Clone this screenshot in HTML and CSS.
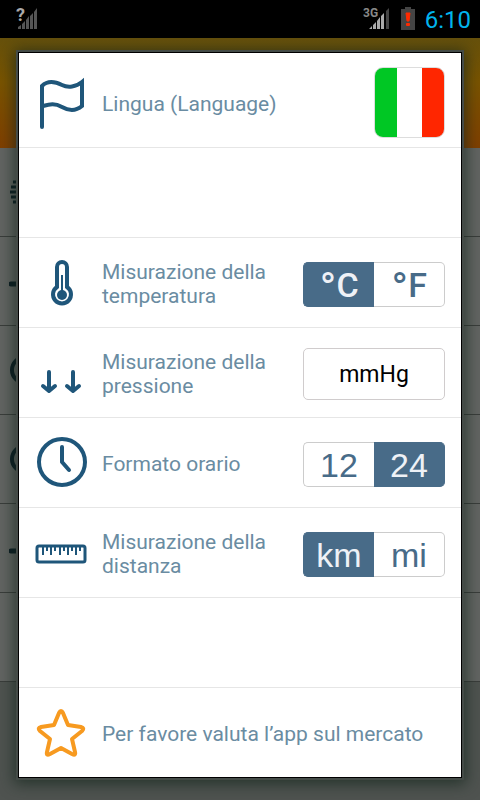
FILE: index.html
```html
<!DOCTYPE html>
<html lang="it">
<head>
    <meta charset="UTF-8">
    <meta name="viewport" content="width=device-width, initial-scale=1.0">
    <title>Impostazioni</title>
    <link rel="stylesheet" href="styles.css">
</head>
<body>

<header class="status-bar">
    <svg class="signal" width="22" height="24" viewBox="0 0 22 24">
        <path d="M1 22V20L4 18V22ZM5 22V17L8 14V22ZM9 22V13L12 9V22ZM13 22V9L16 6V22ZM17 22V5L20 1V22Z" fill="#555"/>
        <text x="-1" y="14" class="signal-unknown">?</text>
    </svg>
    <div class="status-right">
        <svg width="28" height="24" viewBox="0 0 28 24">
            <path d="M6 22L9 19V22ZM10 22V18L13 15V22ZM14 22V14L17 10V22ZM18 22V9L21 6V22Z" fill="#aaa"/>
            <path d="M23 22V4L26 1V22Z" fill="#444"/>
            <text x="0" y="10" class="signal-type">3G</text>
        </svg>
        <svg width="16" height="24" viewBox="0 0 16 24">
            <path d="M1 2H5V0H11V2H15V23H1Z" fill="#444"/>
            <path d="M6 6H10L9 14H7Z" fill="#ff2a00" stroke="#ff2a00"/>
            <rect x="6" y="16" width="4" height="3" rx="1" fill="#ff2a00"/>
        </svg>
        <time>6:10</time>
    </div>
</header>

<main class="screen">
    <!-- dimmed list under the dialog -->
    <div class="backdrop" aria-hidden="true">
        <div class="backdrop-header"></div>
        <div class="backdrop-row">
            <svg width="24" height="30" viewBox="0 0 24 30"><path d="M4 5H24M2 10H24M1 15H24M2 20H24M4 25H24" stroke="#0b1c22" stroke-width="3"/></svg>
        </div>
        <div class="backdrop-row">
            <svg width="24" height="30" viewBox="0 0 24 30"><path d="M2 18H24" stroke="#0b1c22" stroke-width="5" stroke-linecap="round"/></svg>
        </div>
        <div class="backdrop-row">
            <svg width="24" height="30" viewBox="0 0 24 30"><circle cx="16" cy="15" r="13" fill="none" stroke="#0b1c22" stroke-width="4"/></svg>
        </div>
        <div class="backdrop-row">
            <svg width="24" height="30" viewBox="0 0 24 30"><circle cx="16" cy="15" r="13" fill="none" stroke="#0b1c22" stroke-width="4"/></svg>
        </div>
        <div class="backdrop-row">
            <svg width="24" height="30" viewBox="0 0 24 30"><path d="M2 18H24" stroke="#0b1c22" stroke-width="5" stroke-linecap="round"/></svg>
        </div>
        <div class="backdrop-row"></div>
    </div>

    <form class="dialog">
        <div class="row row-language">
            <svg class="icon" width="52" height="52" viewBox="0 0 52 52" fill="none" stroke="#1f567a" stroke-width="4" stroke-linecap="round">
                <path d="M7 50V9C13 3 21 5 27 8S41 10 47 5V29C41 34 34 34 27 30S15 27 8 29"/>
            </svg>
            <span class="label" id="language">Lingua (Language)</span>
            <button type="button" class="flag" aria-labelledby="language"></button>
        </div>

        <div class="row"></div>

        <div class="row">
            <svg class="icon" width="52" height="52" viewBox="0 0 52 52" stroke="#1f567a">
                <path d="M22 30V10A5 5 0 0 1 32 10V30A9 9 0 1 1 22 30Z" fill="none" stroke-width="4"/>
                <circle cx="27" cy="38" r="5" fill="#1f567a" stroke="none"/>
                <path d="M27 18V35" stroke-width="2"/>
            </svg>
            <span class="label">Misurazione della temperatura</span>
            <div class="toggle units" role="radiogroup">
                <label><input type="radio" name="temp" checked><span><b>°</b>C</span></label>
                <label><input type="radio" name="temp"><span><b>°</b>F</span></label>
            </div>
        </div>

        <div class="row">
            <svg class="icon" width="52" height="52" viewBox="0 0 52 52" fill="none" stroke="#1f567a" stroke-width="4" stroke-linecap="round" stroke-linejoin="round">
                <path d="M14 25V44M8 39L14 44L20 39M38 25V44M32 39L38 44L44 39"/>
            </svg>
            <label class="label" for="pressure">Misurazione della pressione</label>
            <select id="pressure">
                <option>mmHg</option>
            </select>
        </div>

        <div class="row">
            <svg class="icon" width="52" height="52" viewBox="0 0 52 52" fill="none" stroke="#1f567a" stroke-width="4" stroke-linecap="round" stroke-linejoin="round">
                <circle cx="27" cy="25" r="23"/>
                <path d="M27 10V25L34 33"/>
            </svg>
            <span class="label">Formato orario</span>
            <div class="toggle" role="radiogroup">
                <label><input type="radio" name="time"><span>12</span></label>
                <label><input type="radio" name="time" checked><span>24</span></label>
            </div>
        </div>

        <div class="row">
            <svg class="icon" width="52" height="52" viewBox="0 0 52 52" fill="none" stroke="#1f567a">
                <rect x="2" y="19" width="48" height="16" rx="2" stroke-width="3"/>
                <path d="M8 19V28M12 19V24M16 19V28M20 19V24M25 19V28M29 19V24M33 19V28M37 19V24M41 19V28M45 19V24" stroke-width="2"/>
            </svg>
            <span class="label">Misurazione della distanza</span>
            <div class="toggle" role="radiogroup">
                <label><input type="radio" name="distance" checked><span>km</span></label>
                <label><input type="radio" name="distance"><span>mi</span></label>
            </div>
        </div>

        <div class="row"></div>

        <a href="#" class="row">
            <svg class="icon" width="52" height="52" viewBox="0 0 52 52" fill="none" stroke="#f79a20" stroke-width="4" stroke-linejoin="round">
                <path d="M24 6Q26 2 28 6L33 18L46 20Q50 21 47 24L37 32L40 45Q41 49 37 47L26 41L15 47Q11 49 12 45L15 32L5 24Q2 21 6 20L19 18Z"/>
            </svg>
            <span class="label">Per favore valuta l’app sul mercato</span>
        </a>
    </form>
</main>

</body>
</html>
```
FILE: styles.css
```css
* {
    box-sizing: border-box;
    margin: 0;
    padding: 0;
}

body {
    font-family: Roboto, "Noto Sans", sans-serif;
    background-color: #4f5350;
    min-height: 100vh;
    display: flex;
    flex-direction: column;
}

.status-bar {
    height: 38px;
    padding: 0 9px 0 17px;
    background-color: #000;
    display: flex;
    justify-content: space-between;
    align-items: center;
}

.signal {
    overflow: visible;
}

.signal-unknown {
    font-size: 18px;
    font-weight: bold;
    fill: #aaa;
}

.signal-type {
    font-size: 12px;
    font-weight: bold;
    fill: #888;
}

.status-right {
    display: flex;
    align-items: center;
    gap: 9px;
}

.status-right time {
    padding-top: 2px;
    font-size: 24px;
    line-height: 36px;
    color: #00b4ec;
}

.screen {
    position: relative;
    flex: 1;
    padding: 14px 18px 22px;
}

.backdrop {
    position: absolute;
    inset: 0;
    overflow: hidden;
}

.backdrop-header {
    height: 110px;
    background: linear-gradient(#66510c, #7a5400 40%, #803f00);
}

.backdrop-row {
    height: 89px;
    padding-left: 9px;
    background-color: #626462;
    border-bottom: 1px solid #3a3d3b;
    display: flex;
    align-items: center;
}

.dialog {
    position: relative;
    background-color: #fff;
    border: 1px solid #000;
    box-shadow: 0 0 0 2px #444b47, 0 2px 14px 4px rgba(20, 38, 28, 0.7);
}

.row {
    height: 90px;
    padding: 0 16px;
    border-bottom: 1px solid #e6e6e6;
    display: flex;
    align-items: center;
    text-decoration: none;
}

.row:last-child {
    height: 89px;
    border-bottom: none;
}

.row-language {
    height: 95px;
    padding-top: 5px;
}

.icon {
    flex: none;
    margin-right: 15px;
}

.label {
    flex: 1;
    padding-top: 3px;
    font-size: 21px;
    line-height: 24px;
    color: #6a8ca2;
}

.flag {
    width: 71px;
    height: 71px;
    border: 1px solid #ddd;
    border-radius: 9px;
    background: linear-gradient(90deg, #00c724 32%, #fff 32%, #fff 68%, #ff2600 68%) border-box;
}

.toggle {
    width: 142px;
    height: 45px;
    margin-top: 3px;
    display: flex;
}

.toggle label {
    flex: 1;
    cursor: pointer;
}

.toggle input {
    position: absolute;
    opacity: 0;
}

.toggle span {
    display: block;
    height: 100%;
    border: 1px solid #ccc;
    font-family: "Liberation Sans", Arial, sans-serif;
    font-size: 34px;
    line-height: 44px;
    text-align: center;
    color: #486b88;
}

.toggle label:first-child span {
    border-right: none;
    border-radius: 5px 0 0 5px;
}

.toggle label:last-child span {
    border-left: none;
    border-radius: 0 5px 5px 0;
}

.toggle input:checked + span {
    background-color: #486b88;
    border-color: #486b88;
    color: #eef1f6;
}

.toggle.units span {
    font-family: Roboto, sans-serif;
    font-weight: 500;
}

.units b {
    font-family: "DejaVu Sans", sans-serif;
}

select {
    width: 142px;
    height: 52px;
    margin-top: 2px;
    padding-top: 1px;
    appearance: none;
    background-color: #fff;
    border: 1px solid #d0cccd;
    border-radius: 5px;
    font-family: Roboto, sans-serif;
    font-size: 23px;
    color: #000;
    text-align: center;
    text-align-last: center;
}
```
